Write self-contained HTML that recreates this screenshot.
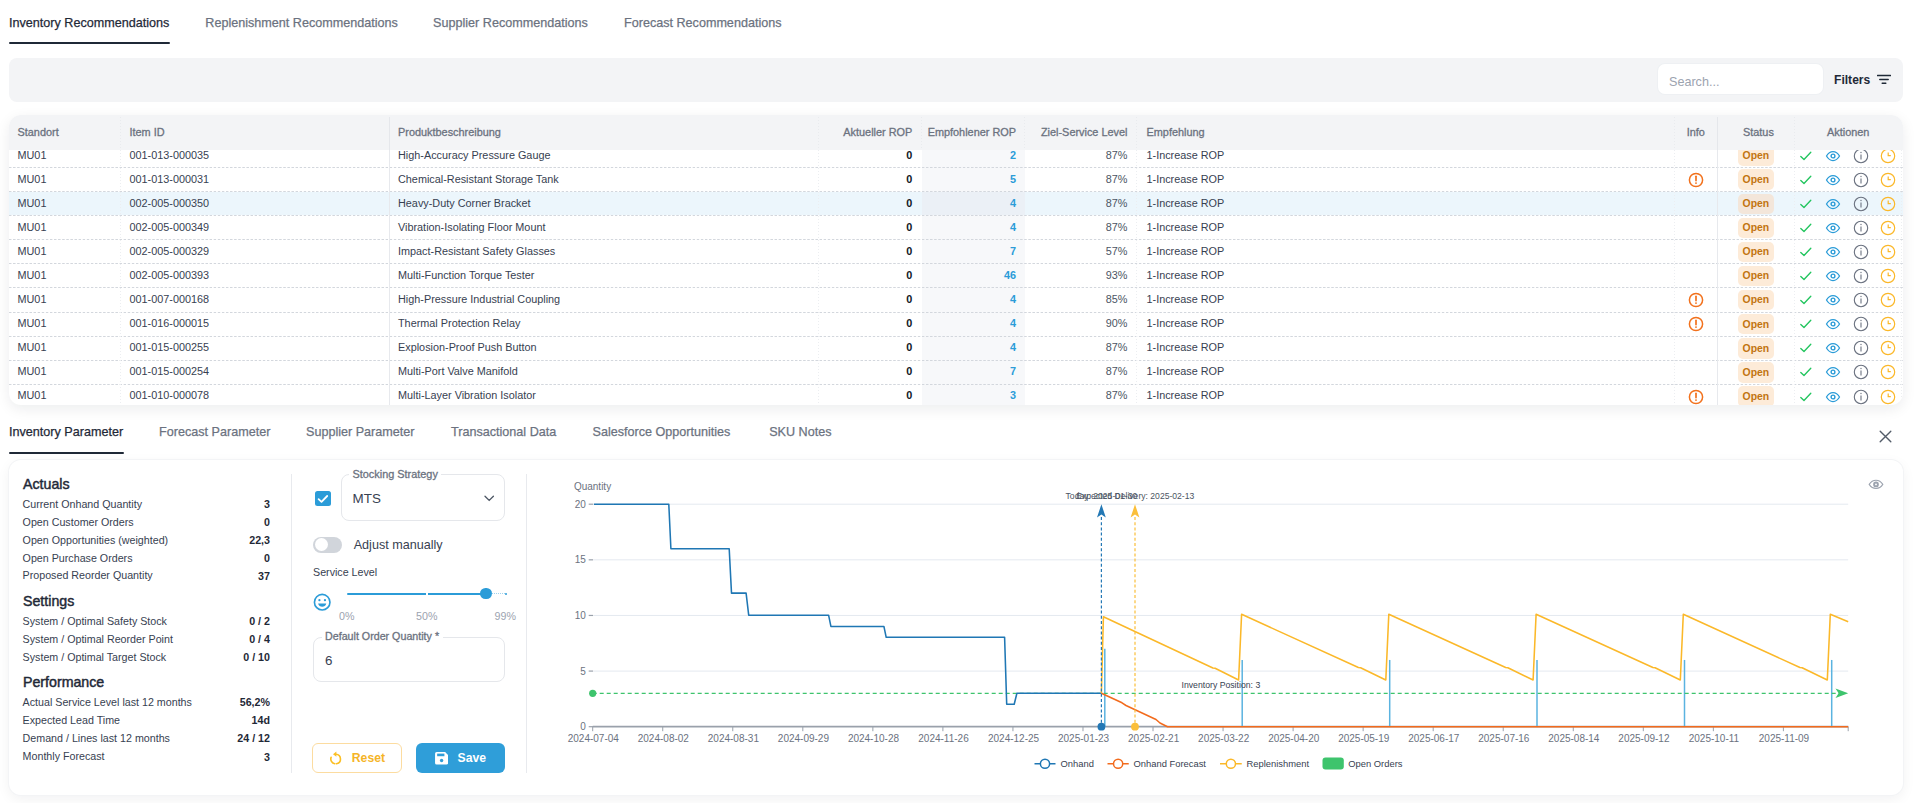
<!DOCTYPE html>
<html><head><meta charset="utf-8"><title>Inventory Recommendations</title>
<style>
html,body{margin:0;padding:0;}
body{width:1920px;height:803px;position:relative;overflow:hidden;background:#ffffff;font-family:"Liberation Sans", sans-serif;}
.t{position:absolute;white-space:nowrap;}
</style></head><body>
<div class="t" style="left:9px;top:15.21px;font-size:12.6px;line-height:16.38px;color:#1f2937;font-weight:normal;-webkit-text-stroke:0.25px #1f2937;">Inventory Recommendations</div><div class="t" style="left:205.3px;top:15.21px;font-size:12.6px;line-height:16.38px;color:#6b7280;font-weight:normal;-webkit-text-stroke:0.25px #6b7280;">Replenishment Recommendations</div><div class="t" style="left:433.1px;top:15.21px;font-size:12.6px;line-height:16.38px;color:#6b7280;font-weight:normal;-webkit-text-stroke:0.25px #6b7280;">Supplier Recommendations</div><div class="t" style="left:624px;top:15.21px;font-size:12.6px;line-height:16.38px;color:#6b7280;font-weight:normal;-webkit-text-stroke:0.25px #6b7280;">Forecast Recommendations</div><div style="position:absolute;left:9px;top:42px;width:161px;height:2px;background:#1f2937;border-radius:1px;"></div><div style="position:absolute;left:9px;top:57.6px;width:1893.5px;height:44.199999999999996px;background:#f3f4f6;border-radius:8px;"></div><div style="position:absolute;left:1657.8px;top:64.1px;width:165.20000000000005px;height:30.400000000000006px;background:#fff;border-radius:7px;box-shadow:0 0 0 1px #eef0f3;"></div><div class="t" style="left:1669px;top:73.91px;font-size:12.6px;line-height:16.38px;color:#9ca3af;font-weight:normal;">Search...</div><div class="t" style="left:1834px;top:73.33px;font-size:12.1px;line-height:15.73px;color:#1f2937;font-weight:bold;">Filters</div><svg style="position:absolute;left:1877px;top:74px" width="14" height="12" viewBox="0 0 14 12"><path d="M0.5 1.6H13.5M2.8 5.4H11.2M5.2 9.2H8.8" stroke="#1f2937" stroke-width="1.5" stroke-linecap="round" fill="none"/></svg><div style="position:absolute;left:9px;top:115.3px;width:1893.5px;height:289.7px;background:#fff;border-radius:12px;box-shadow:0 4px 14px rgba(17,24,39,0.08);"></div><div style="position:absolute;left:9px;top:115.3px;width:1893.5px;height:34.500000000000014px;background:#f3f4f6;border-radius:12px 12px 0 0;"></div><div style="position:absolute;left:9px;top:149.8px;width:1893.5px;height:255.2px;overflow:hidden;border-radius:0 0 12px 12px;"><div style="position:absolute;left:912.5px;top:0.0px;width:103.39999999999998px;height:255.2px;background:#f7f8fa;"></div><div style="position:absolute;left:0px;top:17.2px;width:1893.5px;height:1.0px;background-image:linear-gradient(to right,#d3d7dd 2.6px,transparent 2.6px);background-size:4.1px 1px;"></div><div class="t" style="left:8.50px;top:-2.30px;font-size:10.85px;line-height:14px;color:#374151;font-weight:normal;">MU01</div><div class="t" style="left:120.50px;top:-2.30px;font-size:10.85px;line-height:14px;color:#374151;font-weight:normal;">001-013-000035</div><div class="t" style="left:389.00px;top:-2.30px;font-size:10.85px;line-height:14px;color:#374151;font-weight:normal;">High-Accuracy Pressure Gauge</div><div class="t" style="left:603.30px;width:300px;text-align:right;top:-2.30px;font-size:10.85px;line-height:14px;color:#111827;font-weight:bold;">0</div><div class="t" style="left:707.00px;width:300px;text-align:right;top:-2.30px;font-size:10.85px;line-height:14px;color:#2b9cd8;font-weight:bold;">2</div><div class="t" style="left:818.50px;width:300px;text-align:right;top:-2.30px;font-size:10.85px;line-height:14px;color:#4b5563;font-weight:normal;">87%</div><div class="t" style="left:1137.50px;top:-2.30px;font-size:10.85px;line-height:14px;color:#374151;font-weight:normal;">1-Increase ROP</div><div style="position:absolute;left:1728.5px;top:-4.4px;width:36.700000000000045px;height:20.4px;background:#fdebd8;border-radius:5px;"></div><div class="t" style="left:1728.50px;width:36.7px;text-align:center;top:-0.90px;font-size:10.4px;line-height:14px;color:#c27410;font-weight:bold;">Open</div><div style="position:absolute;left:1789.50px;top:-0.20px;width:14px;height:12px;line-height:0"><svg width="14" height="12" viewBox="0 0 14 12"><path d="M1.8 6.4L5 9.5L11.8 2.3" fill="none" stroke="#22c55e" stroke-width="1.35" stroke-linecap="round" stroke-linejoin="round"/></svg></div><div style="position:absolute;left:1816.00px;top:-0.20px;width:16px;height:12px;line-height:0"><svg width="16" height="12" viewBox="0 0 16 12"><path d="M1.5 6C3.2 2.9 5.4 1.5 8 1.5S12.8 2.9 14.5 6C12.8 9.1 10.6 10.5 8 10.5S3.2 9.1 1.5 6Z" fill="none" stroke="#2b9cd8" stroke-width="1.25"/><circle cx="8" cy="6" r="1.9" fill="none" stroke="#2b9cd8" stroke-width="1.4"/></svg></div><div style="position:absolute;left:1843.60px;top:-2.20px;width:16px;height:16px;line-height:0"><svg width="16" height="16" viewBox="0 0 16 16"><circle cx="8" cy="8" r="6.7" fill="none" stroke="#6b7280" stroke-width="1.1"/><path d="M8 6.4V11.6" stroke="#6b7280" stroke-width="1.1"/><circle cx="8" cy="4.5" r="0.65" fill="#6b7280"/></svg></div><div style="position:absolute;left:1871.00px;top:-2.20px;width:16px;height:16px;line-height:0"><svg width="16" height="16" viewBox="0 0 16 16"><circle cx="8" cy="8" r="6.7" fill="none" stroke="#fbb82a" stroke-width="1.2"/><path d="M8.2 4.4V7.6H10.8" fill="none" stroke="#fbb82a" stroke-width="1.2"/></svg></div><div style="position:absolute;left:0px;top:41.2px;width:1893.5px;height:1.0px;background-image:linear-gradient(to right,#d3d7dd 2.6px,transparent 2.6px);background-size:4.1px 1px;"></div><div class="t" style="left:8.50px;top:21.80px;font-size:10.85px;line-height:14px;color:#374151;font-weight:normal;">MU01</div><div class="t" style="left:120.50px;top:21.80px;font-size:10.85px;line-height:14px;color:#374151;font-weight:normal;">001-013-000031</div><div class="t" style="left:389.00px;top:21.80px;font-size:10.85px;line-height:14px;color:#374151;font-weight:normal;">Chemical-Resistant Storage Tank</div><div class="t" style="left:603.30px;width:300px;text-align:right;top:21.80px;font-size:10.85px;line-height:14px;color:#111827;font-weight:bold;">0</div><div class="t" style="left:707.00px;width:300px;text-align:right;top:21.80px;font-size:10.85px;line-height:14px;color:#2b9cd8;font-weight:bold;">5</div><div class="t" style="left:818.50px;width:300px;text-align:right;top:21.80px;font-size:10.85px;line-height:14px;color:#4b5563;font-weight:normal;">87%</div><div class="t" style="left:1137.50px;top:21.80px;font-size:10.85px;line-height:14px;color:#374151;font-weight:normal;">1-Increase ROP</div><div style="position:absolute;left:1679.00px;top:21.90px;width:16px;height:16px;line-height:0"><svg width="16" height="16" viewBox="0 0 16 16"><circle cx="8" cy="8" r="6.6" fill="none" stroke="#f2711c" stroke-width="1.5"/><path d="M8 4.3V8.6" stroke="#f2711c" stroke-width="1.7" stroke-linecap="round"/><circle cx="8" cy="11.1" r="0.95" fill="#f2711c"/></svg></div><div style="position:absolute;left:1728.5px;top:19.7px;width:36.700000000000045px;height:20.400000000000002px;background:#fdebd8;border-radius:5px;"></div><div class="t" style="left:1728.50px;width:36.7px;text-align:center;top:23.20px;font-size:10.4px;line-height:14px;color:#c27410;font-weight:bold;">Open</div><div style="position:absolute;left:1789.50px;top:23.90px;width:14px;height:12px;line-height:0"><svg width="14" height="12" viewBox="0 0 14 12"><path d="M1.8 6.4L5 9.5L11.8 2.3" fill="none" stroke="#22c55e" stroke-width="1.35" stroke-linecap="round" stroke-linejoin="round"/></svg></div><div style="position:absolute;left:1816.00px;top:23.90px;width:16px;height:12px;line-height:0"><svg width="16" height="12" viewBox="0 0 16 12"><path d="M1.5 6C3.2 2.9 5.4 1.5 8 1.5S12.8 2.9 14.5 6C12.8 9.1 10.6 10.5 8 10.5S3.2 9.1 1.5 6Z" fill="none" stroke="#2b9cd8" stroke-width="1.25"/><circle cx="8" cy="6" r="1.9" fill="none" stroke="#2b9cd8" stroke-width="1.4"/></svg></div><div style="position:absolute;left:1843.60px;top:21.90px;width:16px;height:16px;line-height:0"><svg width="16" height="16" viewBox="0 0 16 16"><circle cx="8" cy="8" r="6.7" fill="none" stroke="#6b7280" stroke-width="1.1"/><path d="M8 6.4V11.6" stroke="#6b7280" stroke-width="1.1"/><circle cx="8" cy="4.5" r="0.65" fill="#6b7280"/></svg></div><div style="position:absolute;left:1871.00px;top:21.90px;width:16px;height:16px;line-height:0"><svg width="16" height="16" viewBox="0 0 16 16"><circle cx="8" cy="8" r="6.7" fill="none" stroke="#fbb82a" stroke-width="1.2"/><path d="M8.2 4.4V7.6H10.8" fill="none" stroke="#fbb82a" stroke-width="1.2"/></svg></div><div style="position:absolute;left:0px;top:42.2px;width:1893.5px;height:23.0px;background:#ecf6fc;"></div><div style="position:absolute;left:912.5px;top:42.2px;width:103.39999999999998px;height:23.0px;background:#ebf0f6;"></div><div style="position:absolute;left:0px;top:65.2px;width:1893.5px;height:1.0px;background-image:linear-gradient(to right,#d3d7dd 2.6px,transparent 2.6px);background-size:4.1px 1px;"></div><div class="t" style="left:8.50px;top:45.90px;font-size:10.85px;line-height:14px;color:#374151;font-weight:normal;">MU01</div><div class="t" style="left:120.50px;top:45.90px;font-size:10.85px;line-height:14px;color:#374151;font-weight:normal;">002-005-000350</div><div class="t" style="left:389.00px;top:45.90px;font-size:10.85px;line-height:14px;color:#374151;font-weight:normal;">Heavy-Duty Corner Bracket</div><div class="t" style="left:603.30px;width:300px;text-align:right;top:45.90px;font-size:10.85px;line-height:14px;color:#111827;font-weight:bold;">0</div><div class="t" style="left:707.00px;width:300px;text-align:right;top:45.90px;font-size:10.85px;line-height:14px;color:#2b9cd8;font-weight:bold;">4</div><div class="t" style="left:818.50px;width:300px;text-align:right;top:45.90px;font-size:10.85px;line-height:14px;color:#4b5563;font-weight:normal;">87%</div><div class="t" style="left:1137.50px;top:45.90px;font-size:10.85px;line-height:14px;color:#374151;font-weight:normal;">1-Increase ROP</div><div style="position:absolute;left:1728.5px;top:43.8px;width:36.700000000000045px;height:20.400000000000006px;background:#f3e6da;border-radius:5px;"></div><div class="t" style="left:1728.50px;width:36.7px;text-align:center;top:47.30px;font-size:10.4px;line-height:14px;color:#c27410;font-weight:bold;">Open</div><div style="position:absolute;left:1789.50px;top:48.00px;width:14px;height:12px;line-height:0"><svg width="14" height="12" viewBox="0 0 14 12"><path d="M1.8 6.4L5 9.5L11.8 2.3" fill="none" stroke="#22c55e" stroke-width="1.35" stroke-linecap="round" stroke-linejoin="round"/></svg></div><div style="position:absolute;left:1816.00px;top:48.00px;width:16px;height:12px;line-height:0"><svg width="16" height="12" viewBox="0 0 16 12"><path d="M1.5 6C3.2 2.9 5.4 1.5 8 1.5S12.8 2.9 14.5 6C12.8 9.1 10.6 10.5 8 10.5S3.2 9.1 1.5 6Z" fill="none" stroke="#2b9cd8" stroke-width="1.25"/><circle cx="8" cy="6" r="1.9" fill="none" stroke="#2b9cd8" stroke-width="1.4"/></svg></div><div style="position:absolute;left:1843.60px;top:46.00px;width:16px;height:16px;line-height:0"><svg width="16" height="16" viewBox="0 0 16 16"><circle cx="8" cy="8" r="6.7" fill="none" stroke="#6b7280" stroke-width="1.1"/><path d="M8 6.4V11.6" stroke="#6b7280" stroke-width="1.1"/><circle cx="8" cy="4.5" r="0.65" fill="#6b7280"/></svg></div><div style="position:absolute;left:1871.00px;top:46.00px;width:16px;height:16px;line-height:0"><svg width="16" height="16" viewBox="0 0 16 16"><circle cx="8" cy="8" r="6.7" fill="none" stroke="#fbb82a" stroke-width="1.2"/><path d="M8.2 4.4V7.6H10.8" fill="none" stroke="#fbb82a" stroke-width="1.2"/></svg></div><div style="position:absolute;left:0px;top:89.2px;width:1893.5px;height:1.0px;background-image:linear-gradient(to right,#d3d7dd 2.6px,transparent 2.6px);background-size:4.1px 1px;"></div><div class="t" style="left:8.50px;top:70.00px;font-size:10.85px;line-height:14px;color:#374151;font-weight:normal;">MU01</div><div class="t" style="left:120.50px;top:70.00px;font-size:10.85px;line-height:14px;color:#374151;font-weight:normal;">002-005-000349</div><div class="t" style="left:389.00px;top:70.00px;font-size:10.85px;line-height:14px;color:#374151;font-weight:normal;">Vibration-Isolating Floor Mount</div><div class="t" style="left:603.30px;width:300px;text-align:right;top:70.00px;font-size:10.85px;line-height:14px;color:#111827;font-weight:bold;">0</div><div class="t" style="left:707.00px;width:300px;text-align:right;top:70.00px;font-size:10.85px;line-height:14px;color:#2b9cd8;font-weight:bold;">4</div><div class="t" style="left:818.50px;width:300px;text-align:right;top:70.00px;font-size:10.85px;line-height:14px;color:#4b5563;font-weight:normal;">87%</div><div class="t" style="left:1137.50px;top:70.00px;font-size:10.85px;line-height:14px;color:#374151;font-weight:normal;">1-Increase ROP</div><div style="position:absolute;left:1728.5px;top:67.9px;width:36.700000000000045px;height:20.39999999999999px;background:#fdebd8;border-radius:5px;"></div><div class="t" style="left:1728.50px;width:36.7px;text-align:center;top:71.40px;font-size:10.4px;line-height:14px;color:#c27410;font-weight:bold;">Open</div><div style="position:absolute;left:1789.50px;top:72.10px;width:14px;height:12px;line-height:0"><svg width="14" height="12" viewBox="0 0 14 12"><path d="M1.8 6.4L5 9.5L11.8 2.3" fill="none" stroke="#22c55e" stroke-width="1.35" stroke-linecap="round" stroke-linejoin="round"/></svg></div><div style="position:absolute;left:1816.00px;top:72.10px;width:16px;height:12px;line-height:0"><svg width="16" height="12" viewBox="0 0 16 12"><path d="M1.5 6C3.2 2.9 5.4 1.5 8 1.5S12.8 2.9 14.5 6C12.8 9.1 10.6 10.5 8 10.5S3.2 9.1 1.5 6Z" fill="none" stroke="#2b9cd8" stroke-width="1.25"/><circle cx="8" cy="6" r="1.9" fill="none" stroke="#2b9cd8" stroke-width="1.4"/></svg></div><div style="position:absolute;left:1843.60px;top:70.10px;width:16px;height:16px;line-height:0"><svg width="16" height="16" viewBox="0 0 16 16"><circle cx="8" cy="8" r="6.7" fill="none" stroke="#6b7280" stroke-width="1.1"/><path d="M8 6.4V11.6" stroke="#6b7280" stroke-width="1.1"/><circle cx="8" cy="4.5" r="0.65" fill="#6b7280"/></svg></div><div style="position:absolute;left:1871.00px;top:70.10px;width:16px;height:16px;line-height:0"><svg width="16" height="16" viewBox="0 0 16 16"><circle cx="8" cy="8" r="6.7" fill="none" stroke="#fbb82a" stroke-width="1.2"/><path d="M8.2 4.4V7.6H10.8" fill="none" stroke="#fbb82a" stroke-width="1.2"/></svg></div><div style="position:absolute;left:0px;top:113.2px;width:1893.5px;height:1.0px;background-image:linear-gradient(to right,#d3d7dd 2.6px,transparent 2.6px);background-size:4.1px 1px;"></div><div class="t" style="left:8.50px;top:94.10px;font-size:10.85px;line-height:14px;color:#374151;font-weight:normal;">MU01</div><div class="t" style="left:120.50px;top:94.10px;font-size:10.85px;line-height:14px;color:#374151;font-weight:normal;">002-005-000329</div><div class="t" style="left:389.00px;top:94.10px;font-size:10.85px;line-height:14px;color:#374151;font-weight:normal;">Impact-Resistant Safety Glasses</div><div class="t" style="left:603.30px;width:300px;text-align:right;top:94.10px;font-size:10.85px;line-height:14px;color:#111827;font-weight:bold;">0</div><div class="t" style="left:707.00px;width:300px;text-align:right;top:94.10px;font-size:10.85px;line-height:14px;color:#2b9cd8;font-weight:bold;">7</div><div class="t" style="left:818.50px;width:300px;text-align:right;top:94.10px;font-size:10.85px;line-height:14px;color:#4b5563;font-weight:normal;">57%</div><div class="t" style="left:1137.50px;top:94.10px;font-size:10.85px;line-height:14px;color:#374151;font-weight:normal;">1-Increase ROP</div><div style="position:absolute;left:1728.5px;top:92.0px;width:36.700000000000045px;height:20.400000000000006px;background:#fdebd8;border-radius:5px;"></div><div class="t" style="left:1728.50px;width:36.7px;text-align:center;top:95.50px;font-size:10.4px;line-height:14px;color:#c27410;font-weight:bold;">Open</div><div style="position:absolute;left:1789.50px;top:96.20px;width:14px;height:12px;line-height:0"><svg width="14" height="12" viewBox="0 0 14 12"><path d="M1.8 6.4L5 9.5L11.8 2.3" fill="none" stroke="#22c55e" stroke-width="1.35" stroke-linecap="round" stroke-linejoin="round"/></svg></div><div style="position:absolute;left:1816.00px;top:96.20px;width:16px;height:12px;line-height:0"><svg width="16" height="12" viewBox="0 0 16 12"><path d="M1.5 6C3.2 2.9 5.4 1.5 8 1.5S12.8 2.9 14.5 6C12.8 9.1 10.6 10.5 8 10.5S3.2 9.1 1.5 6Z" fill="none" stroke="#2b9cd8" stroke-width="1.25"/><circle cx="8" cy="6" r="1.9" fill="none" stroke="#2b9cd8" stroke-width="1.4"/></svg></div><div style="position:absolute;left:1843.60px;top:94.20px;width:16px;height:16px;line-height:0"><svg width="16" height="16" viewBox="0 0 16 16"><circle cx="8" cy="8" r="6.7" fill="none" stroke="#6b7280" stroke-width="1.1"/><path d="M8 6.4V11.6" stroke="#6b7280" stroke-width="1.1"/><circle cx="8" cy="4.5" r="0.65" fill="#6b7280"/></svg></div><div style="position:absolute;left:1871.00px;top:94.20px;width:16px;height:16px;line-height:0"><svg width="16" height="16" viewBox="0 0 16 16"><circle cx="8" cy="8" r="6.7" fill="none" stroke="#fbb82a" stroke-width="1.2"/><path d="M8.2 4.4V7.6H10.8" fill="none" stroke="#fbb82a" stroke-width="1.2"/></svg></div><div style="position:absolute;left:0px;top:137.2px;width:1893.5px;height:1.0px;background-image:linear-gradient(to right,#d3d7dd 2.6px,transparent 2.6px);background-size:4.1px 1px;"></div><div class="t" style="left:8.50px;top:118.20px;font-size:10.85px;line-height:14px;color:#374151;font-weight:normal;">MU01</div><div class="t" style="left:120.50px;top:118.20px;font-size:10.85px;line-height:14px;color:#374151;font-weight:normal;">002-005-000393</div><div class="t" style="left:389.00px;top:118.20px;font-size:10.85px;line-height:14px;color:#374151;font-weight:normal;">Multi-Function Torque Tester</div><div class="t" style="left:603.30px;width:300px;text-align:right;top:118.20px;font-size:10.85px;line-height:14px;color:#111827;font-weight:bold;">0</div><div class="t" style="left:707.00px;width:300px;text-align:right;top:118.20px;font-size:10.85px;line-height:14px;color:#2b9cd8;font-weight:bold;">46</div><div class="t" style="left:818.50px;width:300px;text-align:right;top:118.20px;font-size:10.85px;line-height:14px;color:#4b5563;font-weight:normal;">93%</div><div class="t" style="left:1137.50px;top:118.20px;font-size:10.85px;line-height:14px;color:#374151;font-weight:normal;">1-Increase ROP</div><div style="position:absolute;left:1728.5px;top:116.1px;width:36.700000000000045px;height:20.400000000000006px;background:#fdebd8;border-radius:5px;"></div><div class="t" style="left:1728.50px;width:36.7px;text-align:center;top:119.60px;font-size:10.4px;line-height:14px;color:#c27410;font-weight:bold;">Open</div><div style="position:absolute;left:1789.50px;top:120.30px;width:14px;height:12px;line-height:0"><svg width="14" height="12" viewBox="0 0 14 12"><path d="M1.8 6.4L5 9.5L11.8 2.3" fill="none" stroke="#22c55e" stroke-width="1.35" stroke-linecap="round" stroke-linejoin="round"/></svg></div><div style="position:absolute;left:1816.00px;top:120.30px;width:16px;height:12px;line-height:0"><svg width="16" height="12" viewBox="0 0 16 12"><path d="M1.5 6C3.2 2.9 5.4 1.5 8 1.5S12.8 2.9 14.5 6C12.8 9.1 10.6 10.5 8 10.5S3.2 9.1 1.5 6Z" fill="none" stroke="#2b9cd8" stroke-width="1.25"/><circle cx="8" cy="6" r="1.9" fill="none" stroke="#2b9cd8" stroke-width="1.4"/></svg></div><div style="position:absolute;left:1843.60px;top:118.30px;width:16px;height:16px;line-height:0"><svg width="16" height="16" viewBox="0 0 16 16"><circle cx="8" cy="8" r="6.7" fill="none" stroke="#6b7280" stroke-width="1.1"/><path d="M8 6.4V11.6" stroke="#6b7280" stroke-width="1.1"/><circle cx="8" cy="4.5" r="0.65" fill="#6b7280"/></svg></div><div style="position:absolute;left:1871.00px;top:118.30px;width:16px;height:16px;line-height:0"><svg width="16" height="16" viewBox="0 0 16 16"><circle cx="8" cy="8" r="6.7" fill="none" stroke="#fbb82a" stroke-width="1.2"/><path d="M8.2 4.4V7.6H10.8" fill="none" stroke="#fbb82a" stroke-width="1.2"/></svg></div><div style="position:absolute;left:0px;top:162.2px;width:1893.5px;height:1.0px;background-image:linear-gradient(to right,#d3d7dd 2.6px,transparent 2.6px);background-size:4.1px 1px;"></div><div class="t" style="left:8.50px;top:142.30px;font-size:10.85px;line-height:14px;color:#374151;font-weight:normal;">MU01</div><div class="t" style="left:120.50px;top:142.30px;font-size:10.85px;line-height:14px;color:#374151;font-weight:normal;">001-007-000168</div><div class="t" style="left:389.00px;top:142.30px;font-size:10.85px;line-height:14px;color:#374151;font-weight:normal;">High-Pressure Industrial Coupling</div><div class="t" style="left:603.30px;width:300px;text-align:right;top:142.30px;font-size:10.85px;line-height:14px;color:#111827;font-weight:bold;">0</div><div class="t" style="left:707.00px;width:300px;text-align:right;top:142.30px;font-size:10.85px;line-height:14px;color:#2b9cd8;font-weight:bold;">4</div><div class="t" style="left:818.50px;width:300px;text-align:right;top:142.30px;font-size:10.85px;line-height:14px;color:#4b5563;font-weight:normal;">85%</div><div class="t" style="left:1137.50px;top:142.30px;font-size:10.85px;line-height:14px;color:#374151;font-weight:normal;">1-Increase ROP</div><div style="position:absolute;left:1679.00px;top:142.40px;width:16px;height:16px;line-height:0"><svg width="16" height="16" viewBox="0 0 16 16"><circle cx="8" cy="8" r="6.6" fill="none" stroke="#f2711c" stroke-width="1.5"/><path d="M8 4.3V8.6" stroke="#f2711c" stroke-width="1.7" stroke-linecap="round"/><circle cx="8" cy="11.1" r="0.95" fill="#f2711c"/></svg></div><div style="position:absolute;left:1728.5px;top:140.2px;width:36.700000000000045px;height:20.400000000000006px;background:#fdebd8;border-radius:5px;"></div><div class="t" style="left:1728.50px;width:36.7px;text-align:center;top:143.70px;font-size:10.4px;line-height:14px;color:#c27410;font-weight:bold;">Open</div><div style="position:absolute;left:1789.50px;top:144.40px;width:14px;height:12px;line-height:0"><svg width="14" height="12" viewBox="0 0 14 12"><path d="M1.8 6.4L5 9.5L11.8 2.3" fill="none" stroke="#22c55e" stroke-width="1.35" stroke-linecap="round" stroke-linejoin="round"/></svg></div><div style="position:absolute;left:1816.00px;top:144.40px;width:16px;height:12px;line-height:0"><svg width="16" height="12" viewBox="0 0 16 12"><path d="M1.5 6C3.2 2.9 5.4 1.5 8 1.5S12.8 2.9 14.5 6C12.8 9.1 10.6 10.5 8 10.5S3.2 9.1 1.5 6Z" fill="none" stroke="#2b9cd8" stroke-width="1.25"/><circle cx="8" cy="6" r="1.9" fill="none" stroke="#2b9cd8" stroke-width="1.4"/></svg></div><div style="position:absolute;left:1843.60px;top:142.40px;width:16px;height:16px;line-height:0"><svg width="16" height="16" viewBox="0 0 16 16"><circle cx="8" cy="8" r="6.7" fill="none" stroke="#6b7280" stroke-width="1.1"/><path d="M8 6.4V11.6" stroke="#6b7280" stroke-width="1.1"/><circle cx="8" cy="4.5" r="0.65" fill="#6b7280"/></svg></div><div style="position:absolute;left:1871.00px;top:142.40px;width:16px;height:16px;line-height:0"><svg width="16" height="16" viewBox="0 0 16 16"><circle cx="8" cy="8" r="6.7" fill="none" stroke="#fbb82a" stroke-width="1.2"/><path d="M8.2 4.4V7.6H10.8" fill="none" stroke="#fbb82a" stroke-width="1.2"/></svg></div><div style="position:absolute;left:0px;top:186.2px;width:1893.5px;height:1.0px;background-image:linear-gradient(to right,#d3d7dd 2.6px,transparent 2.6px);background-size:4.1px 1px;"></div><div class="t" style="left:8.50px;top:166.40px;font-size:10.85px;line-height:14px;color:#374151;font-weight:normal;">MU01</div><div class="t" style="left:120.50px;top:166.40px;font-size:10.85px;line-height:14px;color:#374151;font-weight:normal;">001-016-000015</div><div class="t" style="left:389.00px;top:166.40px;font-size:10.85px;line-height:14px;color:#374151;font-weight:normal;">Thermal Protection Relay</div><div class="t" style="left:603.30px;width:300px;text-align:right;top:166.40px;font-size:10.85px;line-height:14px;color:#111827;font-weight:bold;">0</div><div class="t" style="left:707.00px;width:300px;text-align:right;top:166.40px;font-size:10.85px;line-height:14px;color:#2b9cd8;font-weight:bold;">4</div><div class="t" style="left:818.50px;width:300px;text-align:right;top:166.40px;font-size:10.85px;line-height:14px;color:#4b5563;font-weight:normal;">90%</div><div class="t" style="left:1137.50px;top:166.40px;font-size:10.85px;line-height:14px;color:#374151;font-weight:normal;">1-Increase ROP</div><div style="position:absolute;left:1679.00px;top:166.50px;width:16px;height:16px;line-height:0"><svg width="16" height="16" viewBox="0 0 16 16"><circle cx="8" cy="8" r="6.6" fill="none" stroke="#f2711c" stroke-width="1.5"/><path d="M8 4.3V8.6" stroke="#f2711c" stroke-width="1.7" stroke-linecap="round"/><circle cx="8" cy="11.1" r="0.95" fill="#f2711c"/></svg></div><div style="position:absolute;left:1728.5px;top:164.3px;width:36.700000000000045px;height:20.399999999999977px;background:#fdebd8;border-radius:5px;"></div><div class="t" style="left:1728.50px;width:36.7px;text-align:center;top:167.80px;font-size:10.4px;line-height:14px;color:#c27410;font-weight:bold;">Open</div><div style="position:absolute;left:1789.50px;top:168.50px;width:14px;height:12px;line-height:0"><svg width="14" height="12" viewBox="0 0 14 12"><path d="M1.8 6.4L5 9.5L11.8 2.3" fill="none" stroke="#22c55e" stroke-width="1.35" stroke-linecap="round" stroke-linejoin="round"/></svg></div><div style="position:absolute;left:1816.00px;top:168.50px;width:16px;height:12px;line-height:0"><svg width="16" height="12" viewBox="0 0 16 12"><path d="M1.5 6C3.2 2.9 5.4 1.5 8 1.5S12.8 2.9 14.5 6C12.8 9.1 10.6 10.5 8 10.5S3.2 9.1 1.5 6Z" fill="none" stroke="#2b9cd8" stroke-width="1.25"/><circle cx="8" cy="6" r="1.9" fill="none" stroke="#2b9cd8" stroke-width="1.4"/></svg></div><div style="position:absolute;left:1843.60px;top:166.50px;width:16px;height:16px;line-height:0"><svg width="16" height="16" viewBox="0 0 16 16"><circle cx="8" cy="8" r="6.7" fill="none" stroke="#6b7280" stroke-width="1.1"/><path d="M8 6.4V11.6" stroke="#6b7280" stroke-width="1.1"/><circle cx="8" cy="4.5" r="0.65" fill="#6b7280"/></svg></div><div style="position:absolute;left:1871.00px;top:166.50px;width:16px;height:16px;line-height:0"><svg width="16" height="16" viewBox="0 0 16 16"><circle cx="8" cy="8" r="6.7" fill="none" stroke="#fbb82a" stroke-width="1.2"/><path d="M8.2 4.4V7.6H10.8" fill="none" stroke="#fbb82a" stroke-width="1.2"/></svg></div><div style="position:absolute;left:0px;top:210.2px;width:1893.5px;height:1.0px;background-image:linear-gradient(to right,#d3d7dd 2.6px,transparent 2.6px);background-size:4.1px 1px;"></div><div class="t" style="left:8.50px;top:190.50px;font-size:10.85px;line-height:14px;color:#374151;font-weight:normal;">MU01</div><div class="t" style="left:120.50px;top:190.50px;font-size:10.85px;line-height:14px;color:#374151;font-weight:normal;">001-015-000255</div><div class="t" style="left:389.00px;top:190.50px;font-size:10.85px;line-height:14px;color:#374151;font-weight:normal;">Explosion-Proof Push Button</div><div class="t" style="left:603.30px;width:300px;text-align:right;top:190.50px;font-size:10.85px;line-height:14px;color:#111827;font-weight:bold;">0</div><div class="t" style="left:707.00px;width:300px;text-align:right;top:190.50px;font-size:10.85px;line-height:14px;color:#2b9cd8;font-weight:bold;">4</div><div class="t" style="left:818.50px;width:300px;text-align:right;top:190.50px;font-size:10.85px;line-height:14px;color:#4b5563;font-weight:normal;">87%</div><div class="t" style="left:1137.50px;top:190.50px;font-size:10.85px;line-height:14px;color:#374151;font-weight:normal;">1-Increase ROP</div><div style="position:absolute;left:1728.5px;top:188.4px;width:36.700000000000045px;height:20.400000000000006px;background:#fdebd8;border-radius:5px;"></div><div class="t" style="left:1728.50px;width:36.7px;text-align:center;top:191.90px;font-size:10.4px;line-height:14px;color:#c27410;font-weight:bold;">Open</div><div style="position:absolute;left:1789.50px;top:192.60px;width:14px;height:12px;line-height:0"><svg width="14" height="12" viewBox="0 0 14 12"><path d="M1.8 6.4L5 9.5L11.8 2.3" fill="none" stroke="#22c55e" stroke-width="1.35" stroke-linecap="round" stroke-linejoin="round"/></svg></div><div style="position:absolute;left:1816.00px;top:192.60px;width:16px;height:12px;line-height:0"><svg width="16" height="12" viewBox="0 0 16 12"><path d="M1.5 6C3.2 2.9 5.4 1.5 8 1.5S12.8 2.9 14.5 6C12.8 9.1 10.6 10.5 8 10.5S3.2 9.1 1.5 6Z" fill="none" stroke="#2b9cd8" stroke-width="1.25"/><circle cx="8" cy="6" r="1.9" fill="none" stroke="#2b9cd8" stroke-width="1.4"/></svg></div><div style="position:absolute;left:1843.60px;top:190.60px;width:16px;height:16px;line-height:0"><svg width="16" height="16" viewBox="0 0 16 16"><circle cx="8" cy="8" r="6.7" fill="none" stroke="#6b7280" stroke-width="1.1"/><path d="M8 6.4V11.6" stroke="#6b7280" stroke-width="1.1"/><circle cx="8" cy="4.5" r="0.65" fill="#6b7280"/></svg></div><div style="position:absolute;left:1871.00px;top:190.60px;width:16px;height:16px;line-height:0"><svg width="16" height="16" viewBox="0 0 16 16"><circle cx="8" cy="8" r="6.7" fill="none" stroke="#fbb82a" stroke-width="1.2"/><path d="M8.2 4.4V7.6H10.8" fill="none" stroke="#fbb82a" stroke-width="1.2"/></svg></div><div style="position:absolute;left:0px;top:234.2px;width:1893.5px;height:1.0px;background-image:linear-gradient(to right,#d3d7dd 2.6px,transparent 2.6px);background-size:4.1px 1px;"></div><div class="t" style="left:8.50px;top:214.60px;font-size:10.85px;line-height:14px;color:#374151;font-weight:normal;">MU01</div><div class="t" style="left:120.50px;top:214.60px;font-size:10.85px;line-height:14px;color:#374151;font-weight:normal;">001-015-000254</div><div class="t" style="left:389.00px;top:214.60px;font-size:10.85px;line-height:14px;color:#374151;font-weight:normal;">Multi-Port Valve Manifold</div><div class="t" style="left:603.30px;width:300px;text-align:right;top:214.60px;font-size:10.85px;line-height:14px;color:#111827;font-weight:bold;">0</div><div class="t" style="left:707.00px;width:300px;text-align:right;top:214.60px;font-size:10.85px;line-height:14px;color:#2b9cd8;font-weight:bold;">7</div><div class="t" style="left:818.50px;width:300px;text-align:right;top:214.60px;font-size:10.85px;line-height:14px;color:#4b5563;font-weight:normal;">87%</div><div class="t" style="left:1137.50px;top:214.60px;font-size:10.85px;line-height:14px;color:#374151;font-weight:normal;">1-Increase ROP</div><div style="position:absolute;left:1728.5px;top:212.5px;width:36.700000000000045px;height:20.400000000000006px;background:#fdebd8;border-radius:5px;"></div><div class="t" style="left:1728.50px;width:36.7px;text-align:center;top:216.00px;font-size:10.4px;line-height:14px;color:#c27410;font-weight:bold;">Open</div><div style="position:absolute;left:1789.50px;top:216.70px;width:14px;height:12px;line-height:0"><svg width="14" height="12" viewBox="0 0 14 12"><path d="M1.8 6.4L5 9.5L11.8 2.3" fill="none" stroke="#22c55e" stroke-width="1.35" stroke-linecap="round" stroke-linejoin="round"/></svg></div><div style="position:absolute;left:1816.00px;top:216.70px;width:16px;height:12px;line-height:0"><svg width="16" height="12" viewBox="0 0 16 12"><path d="M1.5 6C3.2 2.9 5.4 1.5 8 1.5S12.8 2.9 14.5 6C12.8 9.1 10.6 10.5 8 10.5S3.2 9.1 1.5 6Z" fill="none" stroke="#2b9cd8" stroke-width="1.25"/><circle cx="8" cy="6" r="1.9" fill="none" stroke="#2b9cd8" stroke-width="1.4"/></svg></div><div style="position:absolute;left:1843.60px;top:214.70px;width:16px;height:16px;line-height:0"><svg width="16" height="16" viewBox="0 0 16 16"><circle cx="8" cy="8" r="6.7" fill="none" stroke="#6b7280" stroke-width="1.1"/><path d="M8 6.4V11.6" stroke="#6b7280" stroke-width="1.1"/><circle cx="8" cy="4.5" r="0.65" fill="#6b7280"/></svg></div><div style="position:absolute;left:1871.00px;top:214.70px;width:16px;height:16px;line-height:0"><svg width="16" height="16" viewBox="0 0 16 16"><circle cx="8" cy="8" r="6.7" fill="none" stroke="#fbb82a" stroke-width="1.2"/><path d="M8.2 4.4V7.6H10.8" fill="none" stroke="#fbb82a" stroke-width="1.2"/></svg></div><div style="position:absolute;left:0px;top:258.2px;width:1893.5px;height:1.0px;background-image:linear-gradient(to right,#d3d7dd 2.6px,transparent 2.6px);background-size:4.1px 1px;"></div><div class="t" style="left:8.50px;top:238.70px;font-size:10.85px;line-height:14px;color:#374151;font-weight:normal;">MU01</div><div class="t" style="left:120.50px;top:238.70px;font-size:10.85px;line-height:14px;color:#374151;font-weight:normal;">001-010-000078</div><div class="t" style="left:389.00px;top:238.70px;font-size:10.85px;line-height:14px;color:#374151;font-weight:normal;">Multi-Layer Vibration Isolator</div><div class="t" style="left:603.30px;width:300px;text-align:right;top:238.70px;font-size:10.85px;line-height:14px;color:#111827;font-weight:bold;">0</div><div class="t" style="left:707.00px;width:300px;text-align:right;top:238.70px;font-size:10.85px;line-height:14px;color:#2b9cd8;font-weight:bold;">3</div><div class="t" style="left:818.50px;width:300px;text-align:right;top:238.70px;font-size:10.85px;line-height:14px;color:#4b5563;font-weight:normal;">87%</div><div class="t" style="left:1137.50px;top:238.70px;font-size:10.85px;line-height:14px;color:#374151;font-weight:normal;">1-Increase ROP</div><div style="position:absolute;left:1679.00px;top:238.80px;width:16px;height:16px;line-height:0"><svg width="16" height="16" viewBox="0 0 16 16"><circle cx="8" cy="8" r="6.6" fill="none" stroke="#f2711c" stroke-width="1.5"/><path d="M8 4.3V8.6" stroke="#f2711c" stroke-width="1.7" stroke-linecap="round"/><circle cx="8" cy="11.1" r="0.95" fill="#f2711c"/></svg></div><div style="position:absolute;left:1728.5px;top:236.6px;width:36.700000000000045px;height:20.400000000000006px;background:#fdebd8;border-radius:5px;"></div><div class="t" style="left:1728.50px;width:36.7px;text-align:center;top:240.10px;font-size:10.4px;line-height:14px;color:#c27410;font-weight:bold;">Open</div><div style="position:absolute;left:1789.50px;top:240.80px;width:14px;height:12px;line-height:0"><svg width="14" height="12" viewBox="0 0 14 12"><path d="M1.8 6.4L5 9.5L11.8 2.3" fill="none" stroke="#22c55e" stroke-width="1.35" stroke-linecap="round" stroke-linejoin="round"/></svg></div><div style="position:absolute;left:1816.00px;top:240.80px;width:16px;height:12px;line-height:0"><svg width="16" height="12" viewBox="0 0 16 12"><path d="M1.5 6C3.2 2.9 5.4 1.5 8 1.5S12.8 2.9 14.5 6C12.8 9.1 10.6 10.5 8 10.5S3.2 9.1 1.5 6Z" fill="none" stroke="#2b9cd8" stroke-width="1.25"/><circle cx="8" cy="6" r="1.9" fill="none" stroke="#2b9cd8" stroke-width="1.4"/></svg></div><div style="position:absolute;left:1843.60px;top:238.80px;width:16px;height:16px;line-height:0"><svg width="16" height="16" viewBox="0 0 16 16"><circle cx="8" cy="8" r="6.7" fill="none" stroke="#6b7280" stroke-width="1.1"/><path d="M8 6.4V11.6" stroke="#6b7280" stroke-width="1.1"/><circle cx="8" cy="4.5" r="0.65" fill="#6b7280"/></svg></div><div style="position:absolute;left:1871.00px;top:238.80px;width:16px;height:16px;line-height:0"><svg width="16" height="16" viewBox="0 0 16 16"><circle cx="8" cy="8" r="6.7" fill="none" stroke="#fbb82a" stroke-width="1.2"/><path d="M8.2 4.4V7.6H10.8" fill="none" stroke="#fbb82a" stroke-width="1.2"/></svg></div><div style="position:absolute;left:110.5px;top:0.0px;width:1.0px;height:255.2px;background-image:linear-gradient(to bottom,#eceef1 50%,transparent 50%);background-size:1px 3px;"></div><div style="position:absolute;left:379.9px;top:0.0px;width:1.5px;height:255.2px;background:#e7e9ed;"></div><div style="position:absolute;left:808.9px;top:0.0px;width:1.0px;height:255.2px;background-image:linear-gradient(to bottom,#eceef1 50%,transparent 50%);background-size:1px 3px;"></div><div style="position:absolute;left:1126.5px;top:0.0px;width:1.0px;height:255.2px;background-image:linear-gradient(to bottom,#eceef1 50%,transparent 50%);background-size:1px 3px;"></div><div style="position:absolute;left:1664.7px;top:0.0px;width:1.0px;height:255.2px;background-image:linear-gradient(to bottom,#eceef1 50%,transparent 50%);background-size:1px 3px;"></div><div style="position:absolute;left:1707.6px;top:0.0px;width:1.5px;height:255.2px;background:#e7e9ed;"></div><div style="position:absolute;left:1785.1px;top:0.0px;width:1.0px;height:255.2px;background-image:linear-gradient(to bottom,#eceef1 50%,transparent 50%);background-size:1px 3px;"></div><div style="position:absolute;left:1892.0px;top:0.0px;width:1.0px;height:255.2px;background-image:linear-gradient(to bottom,#eceef1 50%,transparent 50%);background-size:1px 3px;"></div></div><div style="position:absolute;left:119.5px;top:117.3px;width:1.0px;height:32.500000000000014px;background-image:linear-gradient(to bottom,#e9ebee 50%,transparent 50%);background-size:1px 3px;"></div><div style="position:absolute;left:388.9px;top:117.3px;width:1.5px;height:32.500000000000014px;background:#e5e7eb;"></div><div style="position:absolute;left:817.9px;top:117.3px;width:1.0px;height:32.500000000000014px;background-image:linear-gradient(to bottom,#e9ebee 50%,transparent 50%);background-size:1px 3px;"></div><div style="position:absolute;left:921.0px;top:117.3px;width:1.0px;height:32.500000000000014px;background-image:linear-gradient(to bottom,#e9ebee 50%,transparent 50%);background-size:1px 3px;"></div><div style="position:absolute;left:1024.4px;top:117.3px;width:1.0px;height:32.500000000000014px;background-image:linear-gradient(to bottom,#e9ebee 50%,transparent 50%);background-size:1px 3px;"></div><div style="position:absolute;left:1135.5px;top:117.3px;width:1.0px;height:32.500000000000014px;background-image:linear-gradient(to bottom,#e9ebee 50%,transparent 50%);background-size:1px 3px;"></div><div style="position:absolute;left:1673.7px;top:117.3px;width:1.0px;height:32.500000000000014px;background-image:linear-gradient(to bottom,#e9ebee 50%,transparent 50%);background-size:1px 3px;"></div><div style="position:absolute;left:1716.6px;top:117.3px;width:1.5px;height:32.500000000000014px;background:#e5e7eb;"></div><div style="position:absolute;left:1794.1px;top:117.3px;width:1.0px;height:32.500000000000014px;background-image:linear-gradient(to bottom,#e9ebee 50%,transparent 50%);background-size:1px 3px;"></div><div class="t" style="left:17.5px;top:125.42px;font-size:10.9px;line-height:14.17px;color:#6b7280;font-weight:normal;-webkit-text-stroke:0.3px #6b7280;">Standort</div><div class="t" style="left:129.5px;top:125.42px;font-size:10.9px;line-height:14.17px;color:#6b7280;font-weight:normal;-webkit-text-stroke:0.3px #6b7280;">Item ID</div><div class="t" style="left:398px;top:125.42px;font-size:10.9px;line-height:14.17px;color:#6b7280;font-weight:normal;-webkit-text-stroke:0.3px #6b7280;">Produktbeschreibung</div><div class="t" style="left:612.3px;width:300px;text-align:right;top:124.9px;font-size:10.9px;line-height:14px;color:#6b7280;-webkit-text-stroke:0.3px #6b7280;">Aktueller ROP</div><div class="t" style="left:716px;width:300px;text-align:right;top:124.9px;font-size:10.9px;line-height:14px;color:#6b7280;-webkit-text-stroke:0.3px #6b7280;">Empfohlener ROP</div><div class="t" style="left:827.5px;width:300px;text-align:right;top:124.9px;font-size:10.9px;line-height:14px;color:#6b7280;-webkit-text-stroke:0.3px #6b7280;">Ziel-Service Level</div><div class="t" style="left:1146.5px;top:125.42px;font-size:10.9px;line-height:14.17px;color:#6b7280;font-weight:normal;-webkit-text-stroke:0.3px #6b7280;">Empfehlung</div><div class="t" style="left:1395.8px;width:600px;text-align:center;top:125.42px;font-size:10.9px;line-height:14.17px;color:#6b7280;font-weight:normal;-webkit-text-stroke:0.3px #6b7280;">Info</div><div class="t" style="left:1743px;top:125.42px;font-size:10.9px;line-height:14.17px;color:#6b7280;font-weight:normal;-webkit-text-stroke:0.3px #6b7280;">Status</div><div class="t" style="left:1827px;top:125.42px;font-size:10.9px;line-height:14.17px;color:#6b7280;font-weight:normal;-webkit-text-stroke:0.3px #6b7280;">Aktionen</div><div class="t" style="left:9px;top:424.01px;font-size:12.6px;line-height:16.38px;color:#1f2937;font-weight:normal;-webkit-text-stroke:0.25px #1f2937;">Inventory Parameter</div><div class="t" style="left:159.1px;top:424.01px;font-size:12.6px;line-height:16.38px;color:#6b7280;font-weight:normal;-webkit-text-stroke:0.25px #6b7280;">Forecast Parameter</div><div class="t" style="left:306px;top:424.01px;font-size:12.6px;line-height:16.38px;color:#6b7280;font-weight:normal;-webkit-text-stroke:0.25px #6b7280;">Supplier Parameter</div><div class="t" style="left:451px;top:424.01px;font-size:12.6px;line-height:16.38px;color:#6b7280;font-weight:normal;-webkit-text-stroke:0.25px #6b7280;">Transactional Data</div><div class="t" style="left:592.5px;top:424.01px;font-size:12.6px;line-height:16.38px;color:#6b7280;font-weight:normal;-webkit-text-stroke:0.25px #6b7280;">Salesforce Opportunities</div><div class="t" style="left:769.2px;top:424.01px;font-size:12.6px;line-height:16.38px;color:#6b7280;font-weight:normal;-webkit-text-stroke:0.25px #6b7280;">SKU Notes</div><div style="position:absolute;left:9px;top:452px;width:115px;height:2px;background:#1f2937;border-radius:1px;"></div><svg style="position:absolute;left:1879px;top:430px" width="13" height="13" viewBox="0 0 13 13"><path d="M1.2 1.2L11.8 11.8M11.8 1.2L1.2 11.8" stroke="#535c69" stroke-width="1.4" stroke-linecap="round"/></svg><div style="position:absolute;left:8.5px;top:459.5px;width:1894.5px;height:335.29999999999995px;background:#fff;border-radius:12px;box-shadow:0 0 0 1px #f3f4f6,0 4px 14px rgba(17,24,39,0.06);"></div><div class="t" style="left:23px;top:474.87px;font-size:14.2px;line-height:18.46px;color:#1f2937;font-weight:normal;-webkit-text-stroke:0.45px #1f2937;">Actuals</div><div class="t" style="left:22.6px;top:497.85px;font-size:10.7px;line-height:13.91px;color:#374151;font-weight:normal;">Current Onhand Quantity</div><div class="t" style="left:0px;width:270px;text-align:right;top:497.20px;font-size:10.7px;line-height:14px;color:#1f2937;font-weight:bold;">3</div><div class="t" style="left:22.6px;top:515.85px;font-size:10.7px;line-height:13.91px;color:#374151;font-weight:normal;">Open Customer Orders</div><div class="t" style="left:0px;width:270px;text-align:right;top:515.20px;font-size:10.7px;line-height:14px;color:#1f2937;font-weight:bold;">0</div><div class="t" style="left:22.6px;top:533.94px;font-size:10.7px;line-height:13.91px;color:#374151;font-weight:normal;">Open Opportunities (weighted)</div><div class="t" style="left:0px;width:270px;text-align:right;top:533.30px;font-size:10.7px;line-height:14px;color:#1f2937;font-weight:bold;">22,3</div><div class="t" style="left:22.6px;top:551.54px;font-size:10.7px;line-height:13.91px;color:#374151;font-weight:normal;">Open Purchase Orders</div><div class="t" style="left:0px;width:270px;text-align:right;top:550.90px;font-size:10.7px;line-height:14px;color:#1f2937;font-weight:bold;">0</div><div class="t" style="left:22.6px;top:569.25px;font-size:10.7px;line-height:13.91px;color:#374151;font-weight:normal;">Proposed Reorder Quantity</div><div class="t" style="left:0px;width:270px;text-align:right;top:568.60px;font-size:10.7px;line-height:14px;color:#1f2937;font-weight:bold;">37</div><div class="t" style="left:23px;top:591.97px;font-size:14.2px;line-height:18.46px;color:#1f2937;font-weight:normal;-webkit-text-stroke:0.45px #1f2937;">Settings</div><div class="t" style="left:22.6px;top:614.85px;font-size:10.7px;line-height:13.91px;color:#374151;font-weight:normal;">System / Optimal Safety Stock</div><div class="t" style="left:0px;width:270px;text-align:right;top:614.20px;font-size:10.7px;line-height:14px;color:#1f2937;font-weight:bold;">0 / 2</div><div class="t" style="left:22.6px;top:633.04px;font-size:10.7px;line-height:13.91px;color:#374151;font-weight:normal;">System / Optimal Reorder Point</div><div class="t" style="left:0px;width:270px;text-align:right;top:632.40px;font-size:10.7px;line-height:14px;color:#1f2937;font-weight:bold;">0 / 4</div><div class="t" style="left:22.6px;top:650.94px;font-size:10.7px;line-height:13.91px;color:#374151;font-weight:normal;">System / Optimal Target Stock</div><div class="t" style="left:0px;width:270px;text-align:right;top:650.30px;font-size:10.7px;line-height:14px;color:#1f2937;font-weight:bold;">0 / 10</div><div class="t" style="left:23px;top:673.17px;font-size:14.2px;line-height:18.46px;color:#1f2937;font-weight:normal;-webkit-text-stroke:0.45px #1f2937;">Performance</div><div class="t" style="left:22.6px;top:695.85px;font-size:10.7px;line-height:13.91px;color:#374151;font-weight:normal;">Actual Service Level last 12 months</div><div class="t" style="left:0px;width:270px;text-align:right;top:695.20px;font-size:10.7px;line-height:14px;color:#1f2937;font-weight:bold;">56,2%</div><div class="t" style="left:22.6px;top:714.04px;font-size:10.7px;line-height:13.91px;color:#374151;font-weight:normal;">Expected Lead Time</div><div class="t" style="left:0px;width:270px;text-align:right;top:713.40px;font-size:10.7px;line-height:14px;color:#1f2937;font-weight:bold;">14d</div><div class="t" style="left:22.6px;top:731.94px;font-size:10.7px;line-height:13.91px;color:#374151;font-weight:normal;">Demand / Lines last 12 months</div><div class="t" style="left:0px;width:270px;text-align:right;top:731.30px;font-size:10.7px;line-height:14px;color:#1f2937;font-weight:bold;">24 / 12</div><div class="t" style="left:22.6px;top:750.14px;font-size:10.7px;line-height:13.91px;color:#374151;font-weight:normal;">Monthly Forecast</div><div class="t" style="left:0px;width:270px;text-align:right;top:749.50px;font-size:10.7px;line-height:14px;color:#1f2937;font-weight:bold;">3</div><div style="position:absolute;left:291.2px;top:474px;width:1.0px;height:299px;background:#e8eaee;"></div><div style="position:absolute;left:526.1px;top:474px;width:1.0px;height:299px;background:#e8eaee;"></div><div style="position:absolute;left:315.1px;top:490.5px;width:15.599999999999966px;height:15.5px;background:#2b9cd8;border-radius:2.5px;"></div><svg style="position:absolute;left:315.1px;top:490.5px" width="16" height="16" viewBox="0 0 16 16"><path d="M3.6 8.2L6.5 10.8L12.2 5" fill="none" stroke="#fff" stroke-width="1.8" stroke-linecap="round" stroke-linejoin="round"/></svg><div style="position:absolute;left:340.6px;top:474.3px;width:164.0px;height:46.99999999999994px;border:1px solid #e5e7eb;border-radius:8px;box-sizing:border-box;"></div><div class="t" style="left:349px;top:466.8px;padding:0 3.5px;background:#fff;font-size:10.9px;line-height:15px;color:#6b7280;-webkit-text-stroke:0.3px #6b7280;">Stocking Strategy</div><div class="t" style="left:352.6px;top:490.09px;font-size:13.4px;line-height:17.42px;color:#374151;font-weight:normal;">MTS</div><svg style="position:absolute;left:484px;top:495px" width="11" height="7" viewBox="0 0 11 7"><path d="M1 1.2L5.2 5.4L9.4 1.2" fill="none" stroke="#4b5563" stroke-width="1.3" stroke-linecap="round"/></svg><div style="position:absolute;left:313.4px;top:536.6px;width:28.5px;height:16.5px;background:#d1d5db;border-radius:9px;"></div><div style="position:absolute;left:315.2px;top:538.3px;width:13px;height:13px;border-radius:50%;background:#fff;"></div><div class="t" style="left:353.7px;top:537.01px;font-size:12.6px;line-height:16.38px;color:#374151;font-weight:normal;">Adjust manually</div><div class="t" style="left:313px;top:566.25px;font-size:10.7px;line-height:13.91px;color:#374151;font-weight:normal;">Service Level</div><div style="position:absolute;left:347.4px;top:592.6px;width:138.60000000000002px;height:2.0px;background:#2b9cd8;border-radius:1px;"></div><div style="position:absolute;left:426.3px;top:592.2px;width:1.3000000000000114px;height:2.7999999999999545px;background:#fff;"></div><div style="position:absolute;left:486px;top:593px;width:20px;height:1.3999999999999773px;background-image:linear-gradient(to right,#9fd3ef 60%,transparent 60%);background-size:2px 1.4px;"></div><div style="position:absolute;left:505px;top:592.6px;width:2px;height:2.0px;background:#2b9cd8;border-radius:1px;"></div><div style="position:absolute;left:480.4px;top:588px;width:11.2px;height:11.2px;border-radius:50%;background:#2b9cd8;"></div><svg style="position:absolute;left:313.4px;top:593.1px" width="18.4" height="18.4" viewBox="0 0 18 18"><circle cx="9" cy="9" r="7.6" fill="none" stroke="#2b9cd8" stroke-width="1.6"/><circle cx="6.3" cy="7" r="1.1" fill="#2b9cd8"/><circle cx="11.7" cy="7" r="1.1" fill="#2b9cd8"/><path d="M5 10.2H13C12.4 12.4 10.9 13.4 9 13.4S5.6 12.4 5 10.2Z" fill="#2b9cd8"/></svg><div class="t" style="left:46.69999999999999px;width:600px;text-align:center;top:609.85px;font-size:10.7px;line-height:13.91px;color:#9ca3af;font-weight:normal;">0%</div><div class="t" style="left:126.80000000000001px;width:600px;text-align:center;top:609.85px;font-size:10.7px;line-height:13.91px;color:#9ca3af;font-weight:normal;">50%</div><div class="t" style="left:205.3px;width:600px;text-align:center;top:609.85px;font-size:10.7px;line-height:13.91px;color:#9ca3af;font-weight:normal;">99%</div><div style="position:absolute;left:312.5px;top:637.2px;width:192.5px;height:44.799999999999955px;border:1px solid #e5e7eb;border-radius:8px;box-sizing:border-box;"></div><div class="t" style="left:321.5px;top:629.2px;padding:0 3.5px;background:#fff;font-size:10.7px;line-height:15px;color:#6b7280;-webkit-text-stroke:0.3px #6b7280;">Default Order Quantity *</div><div class="t" style="left:325px;top:651.69px;font-size:13.4px;line-height:17.42px;color:#374151;font-weight:normal;">6</div><div style="position:absolute;left:312.4px;top:743.2px;width:89.40000000000003px;height:30.299999999999955px;border:1px solid #fcdca0;border-radius:6px;box-sizing:border-box;background:#fff;"></div><svg style="position:absolute;left:325px;top:746px" width="25" height="24" viewBox="325 746 25 24"><g fill="none" stroke="#fbbf24" stroke-width="1.6" stroke-linecap="round"><path d="M336.43 763.73A4.8 4.8 0 0 0 335.9 754.2"/><path d="M334.77 763.73A4.8 4.8 0 0 1 331.09 757.36"/></g><path d="M333.0 754.2L336.4 751.6L336.4 756.8Z" fill="#fbbf24"/></svg><div class="t" style="left:351.8px;top:750.97px;font-size:12.2px;line-height:15.86px;color:#f5b426;font-weight:bold;">Reset</div><div style="position:absolute;left:416px;top:743.2px;width:89.19999999999999px;height:30.299999999999955px;background:#2f9ed9;border-radius:6px;"></div><svg style="position:absolute;left:435px;top:752.3px" width="13.2" height="12.6" viewBox="0 0 13 12.5"><path d="M0 1.6Q0 0 1.6 0H10L13 3V10.9Q13 12.5 11.4 12.5H1.6Q0 12.5 0 10.9Z" fill="#fff"/><rect x="2.1" y="1.6" width="7.2" height="2.6" fill="#2f9ed9"/><circle cx="6.5" cy="8.4" r="1.7" fill="#2f9ed9"/></svg><div class="t" style="left:457.6px;top:750.97px;font-size:12.2px;line-height:15.86px;color:#ffffff;font-weight:bold;">Save</div><svg style="position:absolute;left:0;top:0" width="1920" height="803" viewBox="0 0 1920 803" font-family="Liberation Sans, sans-serif"><line x1="593.5" y1="671.08" x2="1848.2" y2="671.08" stroke="#e4e9f0" stroke-width="1"/><line x1="588.7" y1="671.08" x2="593.1" y2="671.08" stroke="#9aa1ab" stroke-width="1.2"/><text x="585.8" y="674.68" font-size="10" fill="#6b7280" text-anchor="end">5</text><line x1="593.5" y1="615.45" x2="1848.2" y2="615.45" stroke="#e4e9f0" stroke-width="1"/><line x1="588.7" y1="615.45" x2="593.1" y2="615.45" stroke="#9aa1ab" stroke-width="1.2"/><text x="585.8" y="619.05" font-size="10" fill="#6b7280" text-anchor="end">10</text><line x1="593.5" y1="559.83" x2="1848.2" y2="559.83" stroke="#e4e9f0" stroke-width="1"/><line x1="588.7" y1="559.83" x2="593.1" y2="559.83" stroke="#9aa1ab" stroke-width="1.2"/><text x="585.8" y="563.43" font-size="10" fill="#6b7280" text-anchor="end">15</text><line x1="593.5" y1="504.20" x2="1848.2" y2="504.20" stroke="#e4e9f0" stroke-width="1"/><line x1="588.7" y1="504.20" x2="593.1" y2="504.20" stroke="#9aa1ab" stroke-width="1.2"/><text x="585.8" y="507.80" font-size="10" fill="#6b7280" text-anchor="end">20</text><line x1="588.7" y1="726.7" x2="593.1" y2="726.7" stroke="#9aa1ab" stroke-width="1.2"/><text x="585.8" y="730.30" font-size="10" fill="#6b7280" text-anchor="end">0</text><text x="573.9" y="489.80" font-size="10" fill="#6b7280">Quantity</text><line x1="592.7" y1="726.7" x2="1848.2" y2="726.7" stroke="#9aa1ab" stroke-width="1.8"/><line x1="592.70" y1="726.7" x2="592.70" y2="731.2" stroke="#9aa1ab" stroke-width="1"/><text x="593.30" y="742.10" font-size="10" fill="#6b7280" text-anchor="middle">2024-07-04</text><line x1="662.74" y1="726.7" x2="662.74" y2="731.2" stroke="#9aa1ab" stroke-width="1"/><text x="663.34" y="742.10" font-size="10" fill="#6b7280" text-anchor="middle">2024-08-02</text><line x1="732.78" y1="726.7" x2="732.78" y2="731.2" stroke="#9aa1ab" stroke-width="1"/><text x="733.38" y="742.10" font-size="10" fill="#6b7280" text-anchor="middle">2024-08-31</text><line x1="802.82" y1="726.7" x2="802.82" y2="731.2" stroke="#9aa1ab" stroke-width="1"/><text x="803.42" y="742.10" font-size="10" fill="#6b7280" text-anchor="middle">2024-09-29</text><line x1="872.86" y1="726.7" x2="872.86" y2="731.2" stroke="#9aa1ab" stroke-width="1"/><text x="873.46" y="742.10" font-size="10" fill="#6b7280" text-anchor="middle">2024-10-28</text><line x1="942.90" y1="726.7" x2="942.90" y2="731.2" stroke="#9aa1ab" stroke-width="1"/><text x="943.50" y="742.10" font-size="10" fill="#6b7280" text-anchor="middle">2024-11-26</text><line x1="1012.94" y1="726.7" x2="1012.94" y2="731.2" stroke="#9aa1ab" stroke-width="1"/><text x="1013.54" y="742.10" font-size="10" fill="#6b7280" text-anchor="middle">2024-12-25</text><line x1="1082.99" y1="726.7" x2="1082.99" y2="731.2" stroke="#9aa1ab" stroke-width="1"/><text x="1083.59" y="742.10" font-size="10" fill="#6b7280" text-anchor="middle">2025-01-23</text><line x1="1153.03" y1="726.7" x2="1153.03" y2="731.2" stroke="#9aa1ab" stroke-width="1"/><text x="1153.63" y="742.10" font-size="10" fill="#6b7280" text-anchor="middle">2025-02-21</text><line x1="1223.07" y1="726.7" x2="1223.07" y2="731.2" stroke="#9aa1ab" stroke-width="1"/><text x="1223.67" y="742.10" font-size="10" fill="#6b7280" text-anchor="middle">2025-03-22</text><line x1="1293.11" y1="726.7" x2="1293.11" y2="731.2" stroke="#9aa1ab" stroke-width="1"/><text x="1293.71" y="742.10" font-size="10" fill="#6b7280" text-anchor="middle">2025-04-20</text><line x1="1363.15" y1="726.7" x2="1363.15" y2="731.2" stroke="#9aa1ab" stroke-width="1"/><text x="1363.75" y="742.10" font-size="10" fill="#6b7280" text-anchor="middle">2025-05-19</text><line x1="1433.19" y1="726.7" x2="1433.19" y2="731.2" stroke="#9aa1ab" stroke-width="1"/><text x="1433.79" y="742.10" font-size="10" fill="#6b7280" text-anchor="middle">2025-06-17</text><line x1="1503.23" y1="726.7" x2="1503.23" y2="731.2" stroke="#9aa1ab" stroke-width="1"/><text x="1503.83" y="742.10" font-size="10" fill="#6b7280" text-anchor="middle">2025-07-16</text><line x1="1573.27" y1="726.7" x2="1573.27" y2="731.2" stroke="#9aa1ab" stroke-width="1"/><text x="1573.87" y="742.10" font-size="10" fill="#6b7280" text-anchor="middle">2025-08-14</text><line x1="1643.31" y1="726.7" x2="1643.31" y2="731.2" stroke="#9aa1ab" stroke-width="1"/><text x="1643.91" y="742.10" font-size="10" fill="#6b7280" text-anchor="middle">2025-09-12</text><line x1="1713.35" y1="726.7" x2="1713.35" y2="731.2" stroke="#9aa1ab" stroke-width="1"/><text x="1713.95" y="742.10" font-size="10" fill="#6b7280" text-anchor="middle">2025-10-11</text><line x1="1783.39" y1="726.7" x2="1783.39" y2="731.2" stroke="#9aa1ab" stroke-width="1"/><text x="1783.99" y="742.10" font-size="10" fill="#6b7280" text-anchor="middle">2025-11-09</text><line x1="1848.2" y1="726.7" x2="1848.2" y2="731.2" stroke="#9aa1ab" stroke-width="1"/><line x1="1104.8" y1="648.83" x2="1104.8" y2="726.7" stroke="#5ab3e0" stroke-width="1.5"/><line x1="1242.2" y1="659.95" x2="1242.2" y2="726.7" stroke="#5ab3e0" stroke-width="1.5"/><line x1="1389.7" y1="659.95" x2="1389.7" y2="726.7" stroke="#5ab3e0" stroke-width="1.5"/><line x1="1537.0" y1="659.95" x2="1537.0" y2="726.7" stroke="#5ab3e0" stroke-width="1.5"/><line x1="1684.5" y1="659.95" x2="1684.5" y2="726.7" stroke="#5ab3e0" stroke-width="1.5"/><line x1="1831.7" y1="659.95" x2="1831.7" y2="726.7" stroke="#5ab3e0" stroke-width="1.5"/><line x1="592.7" y1="693.33" x2="1840" y2="693.33" stroke="#3ec46d" stroke-width="1.3" stroke-dasharray="4 3"/><circle cx="592.7" cy="693.33" r="3.6" fill="#3ec46d"/><path d="M1835.5 688.62L1848.2 693.33L1835.5 698.03L1838.6 693.33Z" fill="#3ec46d"/><text x="1181.5" y="688.00" font-size="8.7" fill="#374151">Inventory Position: 3</text><polyline points="593.90,504.20 668.80,504.20 670.90,548.70 729.20,548.70 731.50,593.10 746.10,593.10 748.70,615.20 828.60,615.20 830.90,626.40 883.90,626.40 886.20,637.30 1004.60,637.30 1006.70,704.20 1014.20,704.20 1016.90,693.20 1101.40,693.20" fill="none" stroke="#1f77b4" stroke-width="1.55" stroke-linejoin="round"/><polyline points="1101.40,693.20 1103.40,616.70 1212.91,667.97 1215.11,668.27 1238.60,680.00 1241.60,614.30 1358.40,667.52 1360.60,667.82 1385.80,680.00 1388.80,614.30 1505.68,667.52 1507.88,667.82 1533.10,680.00 1536.10,614.30 1652.90,667.52 1655.10,667.82 1680.30,680.00 1683.30,614.30 1799.94,667.52 1802.14,667.82 1827.30,680.00 1830.30,614.30 1848.20,621.80" fill="none" stroke="#fbb829" stroke-width="1.55" stroke-linejoin="round"/><polyline points="1101.40,693.20 1122.00,702.80 1126.00,705.50 1156.00,719.50 1160.00,723.00 1167.50,726.70 1848.20,726.70" fill="none" stroke="#f26b1d" stroke-width="1.55" stroke-linejoin="round"/><line x1="1101.4" y1="517" x2="1101.4" y2="726.7" stroke="#2378b5" stroke-width="1.2" stroke-dasharray="3 2.2"/><path d="M1101.4 504.2L1105.8000000000002 517.6L1101.4 514.6L1097.0 517.6Z" fill="#2378b5"/><circle cx="1101.4" cy="726.7" r="3.9" fill="#2378b5"/><line x1="1135.0" y1="517" x2="1135.0" y2="726.7" stroke="#fbbf3a" stroke-width="1.2" stroke-dasharray="3 2.2"/><path d="M1135.0 504.2L1139.4 517.6L1135.0 514.6L1130.6 517.6Z" fill="#fbbf3a"/><circle cx="1135.0" cy="726.7" r="3.9" fill="#fbbf3a"/><text x="1101.4" y="499.3" font-size="8.6" fill="#4b5563" text-anchor="middle">Today: 2025-01-30</text><text x="1135.3" y="499.3" font-size="8.6" fill="#4b5563" text-anchor="middle">Expected Delivery: 2025-02-13</text><line x1="1034.5" y1="763.75" x2="1055.5" y2="763.75" stroke="#1f77b4" stroke-width="1.5"/><circle cx="1045.00" cy="763.75" r="4.6" fill="#fff" stroke="#1f77b4" stroke-width="1.5"/><text x="1060.5" y="767.05" font-size="9.4" fill="#374151">Onhand</text><line x1="1107.5" y1="763.75" x2="1128.75" y2="763.75" stroke="#f26b1d" stroke-width="1.5"/><circle cx="1118.12" cy="763.75" r="4.6" fill="#fff" stroke="#f26b1d" stroke-width="1.5"/><text x="1133.5" y="767.05" font-size="9.4" fill="#374151">Onhand Forecast</text><line x1="1220" y1="763.75" x2="1241.75" y2="763.75" stroke="#fbb829" stroke-width="1.5"/><circle cx="1230.88" cy="763.75" r="4.6" fill="#fff" stroke="#fbb829" stroke-width="1.5"/><text x="1246.5" y="767.05" font-size="9.4" fill="#374151">Replenishment</text><rect x="1322.5" y="757.6" width="21.3" height="12" rx="3" fill="#3ec46d"/><text x="1348.25" y="767.05" font-size="9.4" fill="#374151">Open Orders</text><path d="M1869.2 484.4C1871 481.6 1873.3 480.3 1876 480.3S1881 481.6 1882.8 484.4C1881 487.2 1878.7 488.5 1876 488.5S1871 487.2 1869.2 484.4Z" fill="none" stroke="#9ca3af" stroke-width="1.1"/><circle cx="1876" cy="484.4" r="1.9" fill="none" stroke="#9ca3af" stroke-width="1.9"/></svg>
</body></html>
